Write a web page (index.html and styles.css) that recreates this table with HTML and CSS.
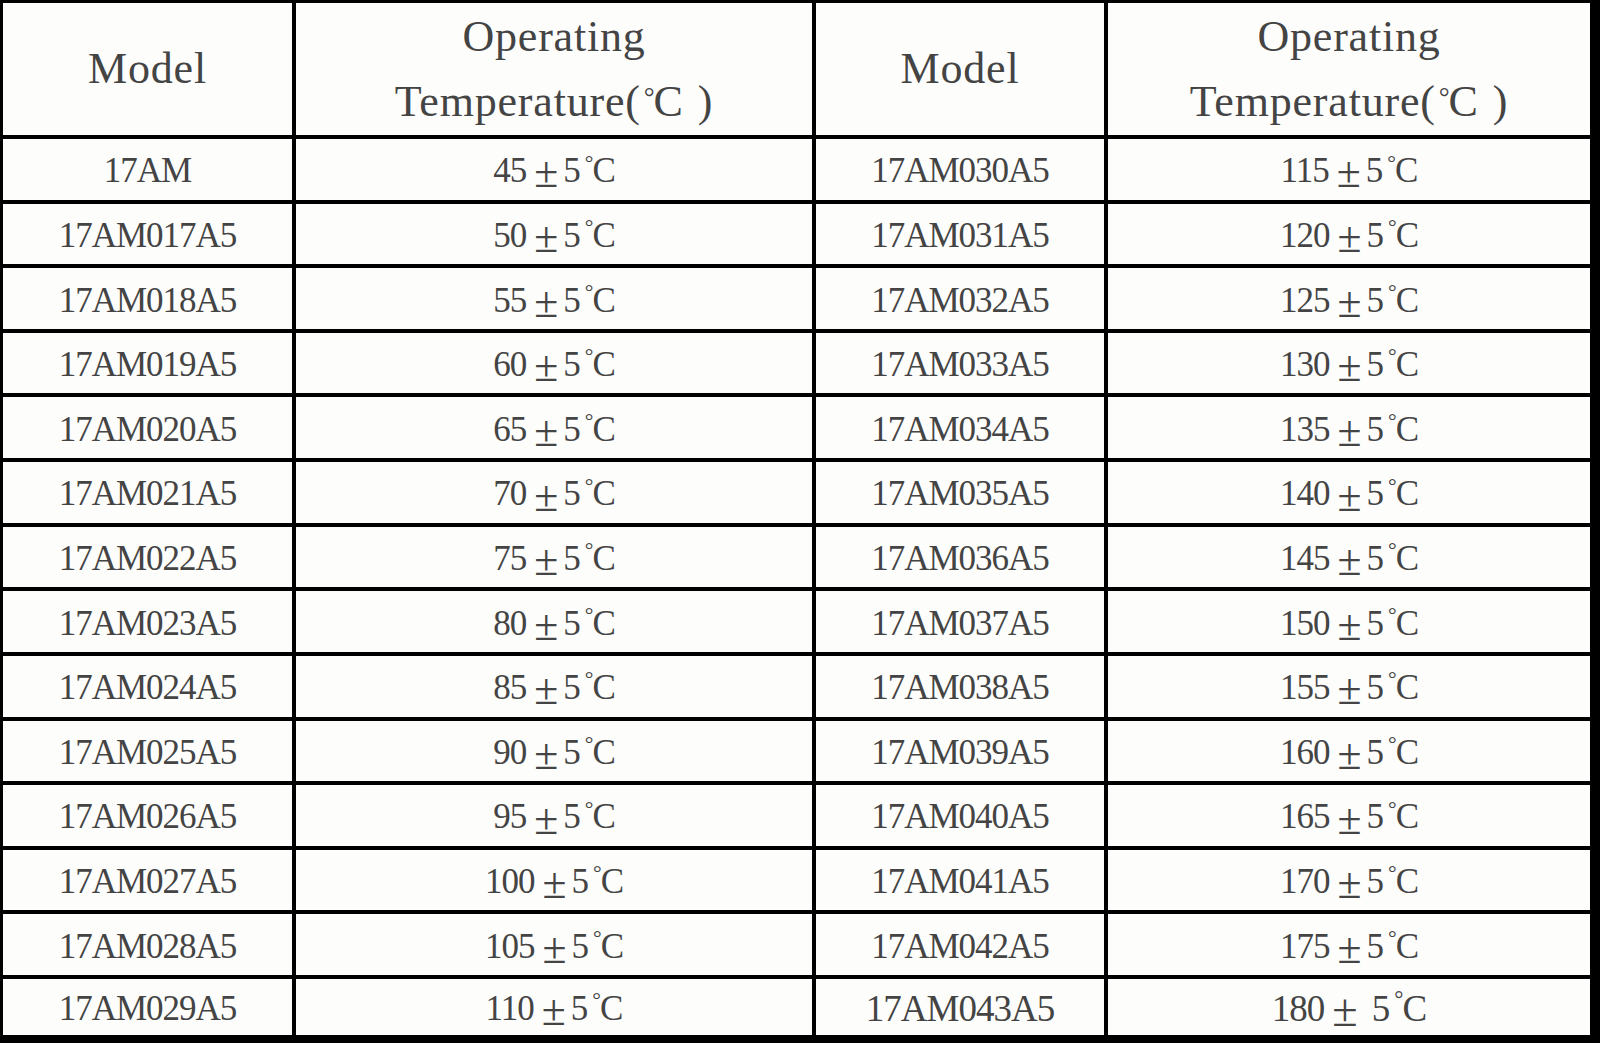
FILE: index.html
```html
<!DOCTYPE html>
<html>
<head>
<meta charset="utf-8">
<link rel="stylesheet" href="styles.css">
</head>
<body>
<div class="sheet">
  <div class="cell head">Model</div>
  <div class="cell head two"><span>Operating</span><span>Temperature(<span class="deg">°</span>C<span class="gap"></span>)</span></div>
  <div class="cell head">Model</div>
  <div class="cell head two"><span>Operating</span><span>Temperature(<span class="deg">°</span>C<span class="gap"></span>)</span></div>

  <div class="cell">17AM</div><div class="cell">45<span class="pm">±</span>5<span class="deg">°</span>C</div><div class="cell">17AM030A5</div><div class="cell">115<span class="pm">±</span>5<span class="deg">°</span>C</div>
  <div class="cell">17AM017A5</div><div class="cell">50<span class="pm">±</span>5<span class="deg">°</span>C</div><div class="cell">17AM031A5</div><div class="cell">120<span class="pm">±</span>5<span class="deg">°</span>C</div>
  <div class="cell">17AM018A5</div><div class="cell">55<span class="pm">±</span>5<span class="deg">°</span>C</div><div class="cell">17AM032A5</div><div class="cell">125<span class="pm">±</span>5<span class="deg">°</span>C</div>
  <div class="cell">17AM019A5</div><div class="cell">60<span class="pm">±</span>5<span class="deg">°</span>C</div><div class="cell">17AM033A5</div><div class="cell">130<span class="pm">±</span>5<span class="deg">°</span>C</div>
  <div class="cell">17AM020A5</div><div class="cell">65<span class="pm">±</span>5<span class="deg">°</span>C</div><div class="cell">17AM034A5</div><div class="cell">135<span class="pm">±</span>5<span class="deg">°</span>C</div>
  <div class="cell">17AM021A5</div><div class="cell">70<span class="pm">±</span>5<span class="deg">°</span>C</div><div class="cell">17AM035A5</div><div class="cell">140<span class="pm">±</span>5<span class="deg">°</span>C</div>
  <div class="cell">17AM022A5</div><div class="cell">75<span class="pm">±</span>5<span class="deg">°</span>C</div><div class="cell">17AM036A5</div><div class="cell">145<span class="pm">±</span>5<span class="deg">°</span>C</div>
  <div class="cell">17AM023A5</div><div class="cell">80<span class="pm">±</span>5<span class="deg">°</span>C</div><div class="cell">17AM037A5</div><div class="cell">150<span class="pm">±</span>5<span class="deg">°</span>C</div>
  <div class="cell">17AM024A5</div><div class="cell">85<span class="pm">±</span>5<span class="deg">°</span>C</div><div class="cell">17AM038A5</div><div class="cell">155<span class="pm">±</span>5<span class="deg">°</span>C</div>
  <div class="cell">17AM025A5</div><div class="cell">90<span class="pm">±</span>5<span class="deg">°</span>C</div><div class="cell">17AM039A5</div><div class="cell">160<span class="pm">±</span>5<span class="deg">°</span>C</div>
  <div class="cell">17AM026A5</div><div class="cell">95<span class="pm">±</span>5<span class="deg">°</span>C</div><div class="cell">17AM040A5</div><div class="cell">165<span class="pm">±</span>5<span class="deg">°</span>C</div>
  <div class="cell">17AM027A5</div><div class="cell">100<span class="pm">±</span>5<span class="deg">°</span>C</div><div class="cell">17AM041A5</div><div class="cell">170<span class="pm">±</span>5<span class="deg">°</span>C</div>
  <div class="cell">17AM028A5</div><div class="cell">105<span class="pm">±</span>5<span class="deg">°</span>C</div><div class="cell">17AM042A5</div><div class="cell">175<span class="pm">±</span>5<span class="deg">°</span>C</div>
  <div class="cell">17AM029A5</div><div class="cell">110<span class="pm">±</span>5<span class="deg">°</span>C</div><div class="cell wide">17AM043A5</div><div class="cell wide">180<span class="pm loose">±</span>5<span class="deg">°</span>C</div>
</div>
</body>
</html>
```
FILE: styles.css
```css
html, body {
  margin: 0;
  padding: 0;
  background: #000;
}

.sheet {
  box-sizing: border-box;
  width: 1600px;
  height: 1043px;
  padding: 3px 10px 8px 3px;
  background: #000;
  display: grid;
  grid-template-columns: 289px 516px 288px 482px;
  grid-template-rows: 132px repeat(13, 1fr) 56px;
  gap: 4px;
  font-family: "Liberation Serif", "Times New Roman", serif;
  color: #444;
}

.cell {
  background: #fdfdfc;
  display: flex;
  align-items: center;
  justify-content: center;
  font-size: 35px;
  letter-spacing: -1px;
  padding-top: 4px;
  box-sizing: border-box;
  white-space: nowrap;
}

.head {
  font-size: 44px;
  letter-spacing: 0.8px;
  padding-top: 0;
  padding-bottom: 2px;
}

.head.two {
  flex-direction: column;
  line-height: 65px;
  padding-top: 6px;
  padding-bottom: 0;
}

.pm {
  font-size: 1.25em;
  line-height: 1;
  letter-spacing: 0;
  margin: 0 5px 0 8px;
  position: relative;
  top: 2px;
}

.pm.loose {
  margin-right: 14px;
}

.deg {
  font-size: 0.62em;
  letter-spacing: 0;
  margin: 0 -1px 0 5px;
  position: relative;
  top: -0.38em;
}

.head .deg {
  margin-left: 3px;
}

.gap {
  display: inline-block;
  width: 14px;
}

.wide {
  font-size: 37px;
}
```
